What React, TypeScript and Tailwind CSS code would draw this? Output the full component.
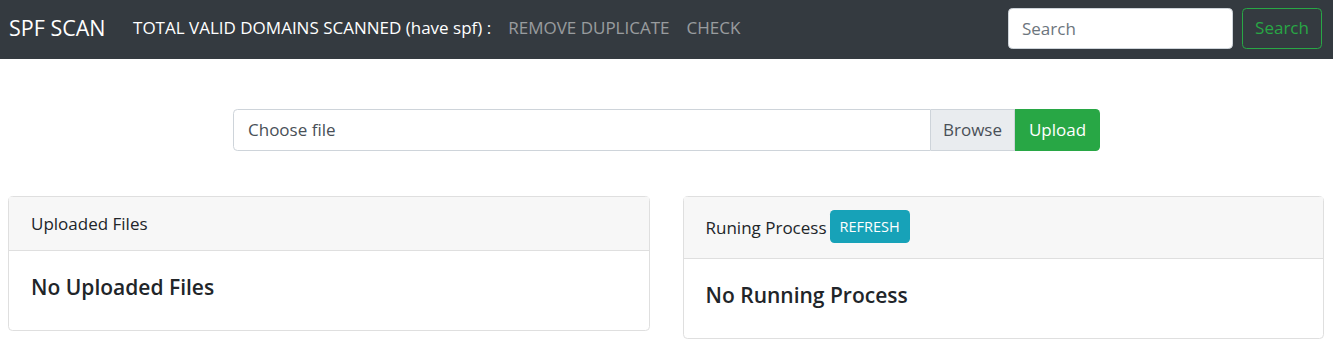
export default function App() {
  const navLinks = [
    { id: 1, title: "TOTAL VALID DOMAINS SCANNED (have spf) :", active: true },
    { id: 2, title: "REMOVE DUPLICATE", active: false },
    { id: 3, title: "CHECK", active: false },
  ];

  return (
    <div
      className="min-h-[358px] bg-white text-[#212529] text-[17px]"
      style={{ fontFamily: '"Open Sans", "Noto Sans", Arial, sans-serif' }}
    >
      <nav className="flex h-[59px] items-center bg-[#343a40] pb-[3px] pl-[9px] pr-[11px]">
        <span className="mr-[19px] text-[21.5px] leading-none text-white">SPF SCAN</span>
        <ul className="flex items-center">
          {navLinks.map((item) => (
            <li key={item.id}>
              <a
                href="#"
                className={
                  "block px-[8.5px] " +
                  (item.active ? "text-white" : "text-white/50")
                }
              >
                {item.title}
              </a>
            </li>
          ))}
        </ul>
        <form className="ml-auto flex items-center">
          <input
            type="text"
            placeholder="Search"
            className="h-[41px] w-[225px] rounded-[4.4px] border border-[#ced4da] bg-white px-[13px] text-[#495057] placeholder:text-[#6c757d] outline-none"
          />
          <button
            type="button"
            className="ml-[9px] h-[41px] w-[80px] rounded-[4.4px] border border-[#28a745] text-[#28a745]"
          >
            Search
          </button>
        </form>
      </nav>

      <div className="mx-auto mt-[50px] flex h-[42px] w-[867px]">
        <div className="flex flex-1 items-center rounded-l-[4.4px] border border-[#ced4da] px-[14px] text-[#495057]">
          Choose file
        </div>
        <div className="flex w-[84px] items-center justify-center border border-l-0 border-[#ced4da] bg-[#e9ecef] text-[#495057]">
          Browse
        </div>
        <button
          type="button"
          className="w-[85px] rounded-r-[4.4px] bg-[#28a745] text-white"
        >
          Upload
        </button>
      </div>

      <div className="mt-[45px] grid grid-cols-2 items-start gap-[33px] pl-[8px] pr-[9px]">
        <div className="rounded-[4.4px] border border-[#dfdfdf]">
          <div className="flex h-[54px] items-center border-b border-[#dfdfdf] bg-[#f7f7f7] px-[22px]">
            Uploaded Files
          </div>
          <div className="px-[22px] pb-[22px] pt-[23px]">
            <h5 className="mb-[8px] text-[21px] font-semibold leading-[26px]">
              No Uploaded Files
            </h5>
          </div>
        </div>

        <div className="rounded-[4.4px] border border-[#dfdfdf]">
          <div className="flex h-[62px] items-center border-b border-[#dfdfdf] bg-[#f7f7f7] px-[22px]">
            <span>Runing Process</span>
            <button
              type="button"
              className="mb-[2px] ml-[3px] h-[33px] rounded-[4.4px] bg-[#17a2b8] px-[10px] text-[14.5px] text-white"
            >
              REFRESH
            </button>
          </div>
          <div className="px-[22px] pb-[22px] pt-[23px]">
            <h5 className="mb-[8px] text-[21px] font-semibold leading-[26px]">
              No Running Process
            </h5>
          </div>
        </div>
      </div>
    </div>
  );
}
